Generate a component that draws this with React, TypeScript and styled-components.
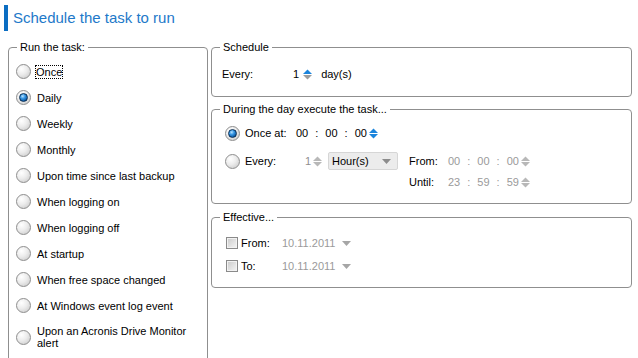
import React from "react";
import styled, { createGlobalStyle } from "styled-components";

const GlobalStyle = createGlobalStyle`
  html, body {
    margin: 0;
    background: #fff;
    overflow: hidden;
  }
  body {
    font-family: "Liberation Sans", Arial, sans-serif;
    font-size: 11px;
    color: #000;
  }
`;

const Page = styled.div`
  width: 638px;
  height: 358px;
  overflow: hidden;
`;

const Title = styled.h1`
  margin: 5px 0 0 4px;
  height: 26px;
  border-left: 4px solid #0b6dc2;
  padding-left: 5px;
  font-size: 15px;
  font-weight: normal;
  line-height: 26px;
  color: #1e79c9;
`;

const Columns = styled.div`
  display: grid;
  grid-template-columns: 200px 421px;
  column-gap: 3px;
  margin: 9px 0 0 8px;
  align-items: start;
`;

const Stack = styled.div`
  display: flex;
  flex-direction: column;
`;

const Group = styled.fieldset<{ $gap?: number; $pb?: number; $minH?: number }>`
  margin: ${(p) => p.$gap ?? 0}px 0 0 0;
  padding: 0 0 ${(p) => p.$pb ?? 0}px 0;
  border: 1px solid #8f8f8f;
  border-radius: 4px;
  min-width: 0;
  min-height: ${(p) => p.$minH ?? 0}px;
  box-sizing: border-box;
`;

const Legend = styled.legend`
  margin-left: 8px;
  padding: 0 3px;
  line-height: 14px;
  font-size: 11px;
`;

const RadioList = styled.div`
  display: flex;
  flex-direction: column;
  padding: 5px 0 0 7px;
`;

const RadioItem = styled.div`
  display: flex;
  align-items: center;
  gap: 5px;
  padding: 5px 0 6px;
`;

const ItemText = styled.span<{ $focus?: boolean }>`
  max-width: 165px;
  margin-left: ${(p) => (p.$focus ? -1 : 0)}px;
  border: 1px dotted ${(p) => (p.$focus ? "#000" : "transparent")};
  line-height: 12px;
`;

const RadioCircle = styled.span<{ $on?: boolean }>`
  position: relative;
  flex: none;
  width: 15px;
  height: 15px;
  box-sizing: border-box;
  border-radius: 50%;
  border: 1px solid #8e8e8e;
  background: radial-gradient(circle at 35% 30%, #ffffff 0%, #ececec 45%, #c4c4c4 100%);
  &::after {
    content: "";
    display: ${(p) => (p.$on ? "block" : "none")};
    position: absolute;
    left: 2px;
    top: 2px;
    width: 9px;
    height: 9px;
    box-sizing: border-box;
    border-radius: 50%;
    border: 1px solid #0a2f55;
    background: radial-gradient(circle at 38% 32%, #b9e3ff 0%, #3b9ae6 35%, #0b5aa6 75%, #083e74 100%);
  }
`;

const Row = styled.div<{ $mt?: number; $pl?: number }>`
  display: flex;
  align-items: center;
  height: 18px;
  margin-top: ${(p) => p.$mt ?? 0}px;
  padding-left: ${(p) => p.$pl ?? 0}px;
  white-space: nowrap;
`;

const Label = styled.span<{ $w: number; $ml?: number }>`
  width: ${(p) => p.$w}px;
  margin-left: ${(p) => p.$ml ?? 0}px;
  flex: none;
`;

const Num = styled.span<{ $w: number; $dim?: boolean }>`
  width: ${(p) => p.$w}px;
  text-align: right;
  flex: none;
  color: ${(p) => (p.$dim ? "#8f8f8f" : "#000")};
`;

const Time = styled.span<{ $dim?: boolean }>`
  display: inline-flex;
  gap: 7px;
  color: ${(p) => (p.$dim ? "#9a9a9a" : "#000")};
`;

const Unit = styled.span`
  margin-left: 9px;
`;

const Combo = styled.div`
  display: flex;
  align-items: center;
  justify-content: space-between;
  box-sizing: border-box;
  width: 70px;
  height: 18px;
  margin-left: 6px;
  padding: 0 6px 0 3px;
  background: #ececec;
  border: 1px solid #d6d6d6;
  border-radius: 2px;
`;

const Check = styled.span`
  flex: none;
  width: 12px;
  height: 12px;
  box-sizing: border-box;
  border: 1px solid #8a8a8a;
  background: linear-gradient(135deg, #c9c9c9 0%, #e4e4e4 60%, #f4f4f4 100%);
  box-shadow: inset 0 0 0 1px #f2f2f2;
  margin-right: 3px;
`;

const DateText = styled.span`
  color: #9a9a9a;
`;

const SpinIcon = ({ up, down, ml = 0 }: { up: string; down: string; ml?: number }) => (
  <svg width="9" height="11" viewBox="0 0 9 11" style={{ marginLeft: ml, flex: "none" }}>
    <polygon points="0,5 4.5,0.5 9,5" fill={up} />
    <polygon points="0,6 9,6 4.5,10.5" fill={down} />
  </svg>
);

const Caret = ({ ml = 0, color = "#a6a6a6" }: { ml?: number; color?: string }) => (
  <svg width="9" height="5" viewBox="0 0 9 5" style={{ marginLeft: ml, flex: "none" }}>
    <polygon points="0,0 9,0 4.5,5" fill={color} />
  </svg>
);

const TimeValue = ({ parts, dim }: { parts: string[]; dim?: boolean }) => (
  <Time $dim={dim}>
    <span>{parts[0]}</span>
    <span>:</span>
    <span>{parts[1]}</span>
    <span>:</span>
    <span>{parts[2]}</span>
  </Time>
);

const triggers = [
  "Once",
  "Daily",
  "Weekly",
  "Monthly",
  "Upon time since last backup",
  "When logging on",
  "When logging off",
  "At startup",
  "When free space changed",
  "At Windows event log event",
  "Upon an Acronis Drive Monitor alert",
];

const BLUE = "#1a84dc";
const GREY = "#9c9c9c";
const LIGHT = "#b8b8b8";

export default function App() {
  return (
    <Page>
      <GlobalStyle />
      <Title>Schedule the task to run</Title>
      <Columns>
        <Group $minH={340}>
          <Legend>Run the task:</Legend>
          <RadioList>
            {triggers.map((t) => (
              <RadioItem key={t}>
                <RadioCircle $on={t === "Daily"} />
                <ItemText $focus={t === "Once"}>{t}</ItemText>
              </RadioItem>
            ))}
          </RadioList>
        </Group>

        <Stack>
          <Group $pb={13}>
            <Legend>Schedule</Legend>
            <Row $mt={11} $pl={10}>
              <Label $w={71}>Every:</Label>
              <span>1</span>
              <SpinIcon up={BLUE} down={GREY} ml={4} />
              <Unit>day(s)</Unit>
            </Row>
          </Group>

          <Group $gap={5} $pb={12}>
            <Legend>During the day execute the task...</Legend>
            <Row $mt={8} $pl={13}>
              <RadioCircle $on />
              <Label $w={51} $ml={5}>Once at:</Label>
              <TimeValue parts={["00", "00", "00"]} />
              <SpinIcon up={BLUE} down={BLUE} ml={2} />
            </Row>
            <Row $mt={10} $pl={13}>
              <RadioCircle />
              <Label $w={51} $ml={5}>Every:</Label>
              <Num $w={15} $dim>1</Num>
              <SpinIcon up={LIGHT} down={LIGHT} ml={2} />
              <Combo>
                <span>Hour(s)</span>
                <Caret color="#8c8c8c" />
              </Combo>
              <Label $w={39} $ml={11}>From:</Label>
              <TimeValue parts={["00", "00", "00"]} dim />
              <SpinIcon up={LIGHT} down={LIGHT} ml={2} />
            </Row>
            <Row $mt={3} $pl={197}>
              <Label $w={39}>Until:</Label>
              <TimeValue parts={["23", "59", "59"]} dim />
              <SpinIcon up={LIGHT} down={LIGHT} ml={2} />
            </Row>
          </Group>

          <Group $gap={6} $pb={12}>
            <Legend>Effective...</Legend>
            <Row $mt={10} $pl={14}>
              <Check />
              <Label $w={41}>From:</Label>
              <DateText>10.11.2011</DateText>
              <Caret ml={7} />
            </Row>
            <Row $mt={5} $pl={14}>
              <Check />
              <Label $w={41}>To:</Label>
              <DateText>10.11.2011</DateText>
              <Caret ml={7} />
            </Row>
          </Group>
        </Stack>
      </Columns>
    </Page>
  );
}
